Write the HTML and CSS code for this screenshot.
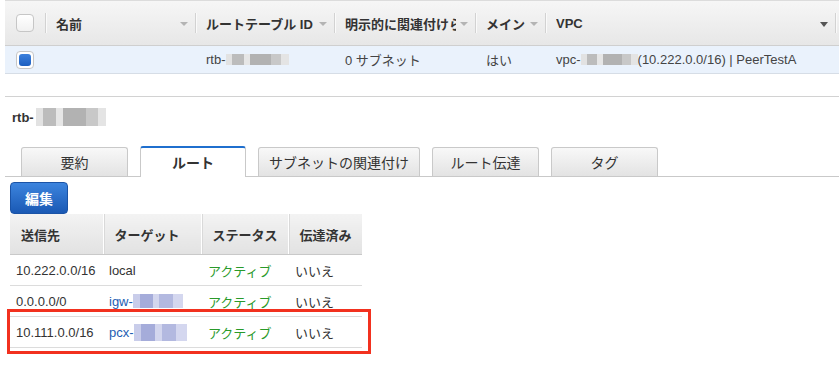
FILE: index.html
```html
<!DOCTYPE html>
<html lang="ja">
<head>
  <meta charset="UTF-8">
  <title>ルートテーブル</title>
  <link rel="stylesheet" href="styles.css">
</head>
<body>

<div class="grid">
  <div class="grid-head">
    <div class="hcell hcell-check"><span class="check"></span><span class="sep"></span></div>
    <div class="hcell"><span class="label">名前</span><span class="sort"></span><span class="sep"></span></div>
    <div class="hcell"><span class="label">ルートテーブル ID</span><span class="sort"></span><span class="sep"></span></div>
    <div class="hcell"><span class="label">明示的に関連付けられたサブネット</span><span class="sort"></span><span class="sep"></span></div>
    <div class="hcell"><span class="label">メイン</span><span class="sort"></span><span class="sep"></span></div>
    <div class="hcell"><span class="label">VPC</span><span class="sort sort-dark"></span><span class="sep"></span></div>
    <div class="hcell"></div>
  </div>
  <div class="grid-row selected">
    <div class="cell cell-check"><span class="check checked"></span></div>
    <div class="cell"></div>
    <div class="cell">rtb-<span class="blur blur-gray blur-rtb"></span></div>
    <div class="cell">0 サブネット</div>
    <div class="cell">はい</div>
    <div class="cell">vpc-<span class="blur blur-gray blur-vpc"></span>(10.222.0.0/16) | PeerTestA</div>
    <div class="cell"></div>
  </div>
</div>

<div class="detail">
  <div class="detail-title">rtb-<span class="blur blur-gray blur-title"></span></div>

  <div class="tabs">
    <div class="tab">要約</div>
    <div class="tab active">ルート</div>
    <div class="tab tab-wide">サブネットの関連付け</div>
    <div class="tab">ルート伝達</div>
    <div class="tab">タグ</div>
  </div>

  <button class="btn-edit">編集</button>

  <div class="routes-wrap">
    <table class="routes">
      <colgroup>
        <col class="c-dest">
        <col class="c-target">
        <col class="c-status">
        <col class="c-prop">
      </colgroup>
      <thead>
        <tr>
          <th>送信先</th>
          <th>ターゲット</th>
          <th>ステータス</th>
          <th>伝達済み</th>
        </tr>
      </thead>
      <tbody>
        <tr>
          <td>10.222.0.0/16</td>
          <td>local</td>
          <td class="ok">アクティブ</td>
          <td>いいえ</td>
        </tr>
        <tr>
          <td>0.0.0.0/0</td>
          <td><a class="link">igw-<span class="blur blur-blue blur-igw"></span></a></td>
          <td class="ok">アクティブ</td>
          <td>いいえ</td>
        </tr>
        <tr>
          <td>10.111.0.0/16</td>
          <td><a class="link">pcx-<span class="blur blur-blue blur-pcx"></span></a></td>
          <td class="ok">アクティブ</td>
          <td>いいえ</td>
        </tr>
      </tbody>
    </table>
    <!-- 注目する行の赤枠 -->
    <div class="highlight"></div>
  </div>
</div>

</body>
</html>
```

FILE: styles.css
```css
body {
  margin: 0;
  padding: 0;
  min-height: 366px;
  background: #fff;
  font-family: "Liberation Sans", "Noto Sans CJK JP", sans-serif;
  font-size: 13px;
  color: #444;
  overflow-x: hidden;
}

/* 上部グリッド */
.grid {
  margin-left: 5px;
  height: 97px;
  box-sizing: border-box;
  border-top: 1px solid #dcdcdc;
  border-bottom: 1px solid #d2d2d2;
  overflow: hidden;
}
.grid-head, .grid-row {
  display: grid;
  grid-template-columns: 41px 150px 139px 141px 70px 290px 200px;
}
.grid-head {
  height: 45px;
  box-sizing: border-box;
  background: linear-gradient(#f6f6f6, #e7e7e7);
  border-bottom: 1px solid #cfcfcf;
}
.hcell {
  display: flex;
  align-items: center;
  padding-left: 10px;
  min-width: 0;
  font-weight: 700;
  color: #333;
}
.hcell-check { padding-left: 11px; justify-content: space-between; }
.hcell .label {
  flex: 1;
  white-space: nowrap;
  overflow: hidden;
}
.sort {
  width: 0; height: 0;
  border-left: 4px solid transparent;
  border-right: 4px solid transparent;
  border-top: 4px solid #b4b4b4;
  margin: 2px 7px 0 4px;
}
.sort-dark { border-top-color: #555; border-top-width: 5px; }
.sep {
  width: 1px;
  height: 20px;
  background: #d2d2d2;
  box-shadow: 1px 0 0 #fafafa;
}
.grid-row {
  height: 28px;
  box-sizing: border-box;
  border-bottom: 1px solid #d6dde6;
}
.grid-row.selected { background: #eaf2fc; }
.cell {
  display: flex;
  align-items: center;
  padding-left: 10px;
  white-space: nowrap;
}
.cell-check { padding-left: 11px; }

.check {
  width: 18px;
  height: 18px;
  box-sizing: border-box;
  border: 1px solid #c6c6c6;
  border-radius: 4px;
  background: linear-gradient(#fff, #f1f1f1);
  position: relative;
}
.check.checked {
  background: #fff;
}
.check.checked::after {
  content: "";
  position: absolute;
  inset: 2px;
  border-radius: 3px;
  background: linear-gradient(#3c80dc, #1d5fc0);
}

/* 伏せ字 */
.blur {
  display: inline-block;
  height: 11px;
  vertical-align: middle;
}
.blur-gray {
  background: linear-gradient(90deg, #e2e2e2 0 10%, #bcbcbc 10% 28%, #e6e6e6 28% 38%, #b2b2b2 38% 72%, #c8c8c8 72% 88%, #e4e4e4 88%);
}
.blur-blue {
  background: linear-gradient(90deg, #c9cdea 0 14%, #a5acda 14% 40%, #d3d6ee 40% 52%, #b3b9e0 52% 80%, #d4d7ef 80%);
}
.blur-rtb { width: 63px; }
.blur-vpc { width: 57px; }
.blur-title { width: 70px; height: 18px; margin-left: 2px; }
.blur-igw { width: 50px; height: 14px; }
.blur-pcx { width: 53px; height: 17px; }

/* 詳細 */
.detail-title {
  margin: 11px 0 0 12px;
  font-weight: 700;
  color: #333;
  display: flex;
  align-items: center;
  height: 18px;
}
.tabs {
  display: flex;
  align-items: flex-end;
  gap: 12px;
  margin: 20px 0 0 5px;
  padding-left: 16px;
  height: 30px;
  border-bottom: 1px solid #c9c9c9;
}
.tab {
  width: 107px;
  height: 29px;
  box-sizing: border-box;
  border: 1px solid #c9c9c9;
  border-bottom: none;
  border-radius: 3px 3px 0 0;
  background: linear-gradient(#f8f8f8, #e3e3e3);
  display: flex;
  align-items: center;
  justify-content: center;
  font-size: 14px;
  color: #333;
}
.tab.active {
  width: 106px;
  height: 31px;
  margin-bottom: -1px;
  border-top: 2px solid #1f6fce;
  background: #fff;
  font-weight: 700;
  padding-bottom: 1px;
}
.tab-wide { width: 162px; }

.btn-edit {
  display: block;
  margin: 5px 0 0 10px;
  width: 58px;
  height: 32px;
  border: 1px solid #1a53a6;
  border-radius: 4px;
  background: linear-gradient(#3c84de, #1a59b4);
  color: #fff;
  font-family: inherit;
  font-size: 14px;
  font-weight: 700;
  padding: 0;
}

/* ルート表 */
.routes-wrap {
  position: relative;
  margin-left: 10px;
  width: 352px;
  padding-bottom: 12px;
}
.routes {
  width: 352px;
  border-collapse: collapse;
  table-layout: fixed;
}
.c-dest { width: 93px; }
.c-target { width: 98px; }
.c-status { width: 87px; }
.c-prop { width: 74px; }
.routes th {
  height: 40px;
  padding: 0 0 0 11px;
  text-align: left;
  font-weight: 700;
  color: #333;
  white-space: nowrap;
  background: linear-gradient(#f3f3f3, #e2e2e2);
  border-left: 1px solid #fff;
  border-bottom: 1px solid #c9c9c9;
  box-shadow: inset 1px 0 0 #d9d9d9;
}
.routes th:first-child { border-left: none; box-shadow: none; }
.routes td {
  height: 30px;
  padding: 0 0 0 6px;
  border-bottom: 1px solid #dcdcdc;
  white-space: nowrap;
  color: #333;
}
.routes td:nth-child(3), .routes td:nth-child(4) { padding-left: 7px; }
.routes td.ok { color: #2a9a2a; }
.link { color: #1d5db3; display: inline-flex; align-items: center; }

.highlight {
  position: absolute;
  left: -3px;
  top: 95px;
  width: 364px;
  height: 45px;
  box-sizing: border-box;
  border: 3px solid #f2311f;
}
```
